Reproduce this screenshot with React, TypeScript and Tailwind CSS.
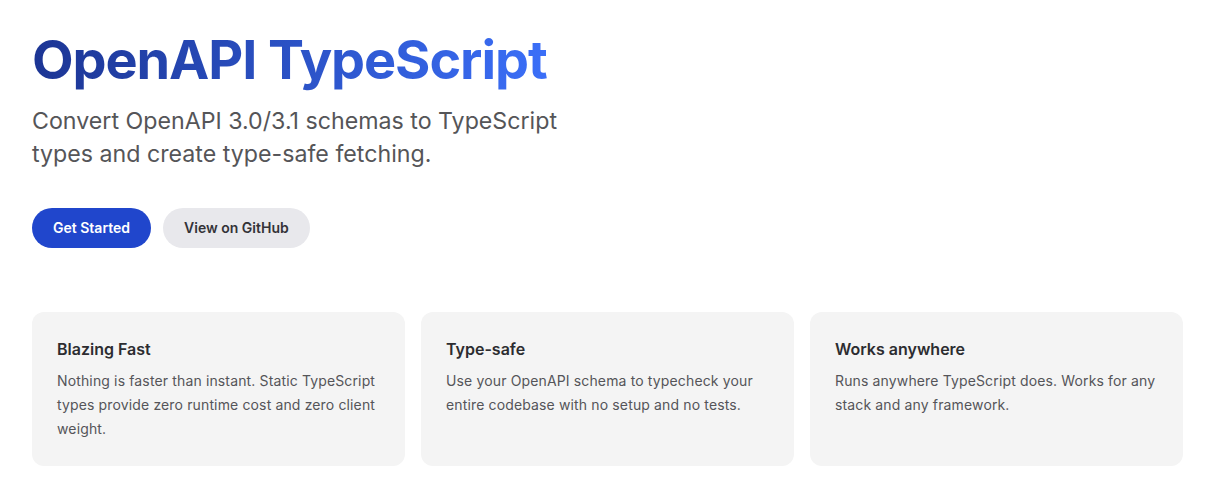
const features = [
  {
    title: "Blazing Fast",
    body: "Nothing is faster than instant. Static TypeScript types provide zero runtime cost and zero client weight.",
  },
  {
    title: "Type-safe",
    body: "Use your OpenAPI schema to typecheck your entire codebase with no setup and no tests.",
  },
  {
    title: "Works anywhere",
    body: "Runs anywhere TypeScript does. Works for any stack and any framework.",
  },
];

export default function App() {
  return (
    <div className="min-h-screen bg-white pl-8 pr-[29px] pt-7 font-['Inter',sans-serif]">
      <h1 className="inline-block bg-gradient-to-r from-[#1c3594] to-[#3b6ff8] bg-clip-text text-[54px] font-bold leading-[1.2] tracking-[-0.02em] text-transparent">
        OpenAPI TypeScript
      </h1>
      <p className="mt-3 max-w-[570px] text-[23.2px] leading-[33px] text-[#555558]">
        Convert OpenAPI 3.0/3.1 schemas to TypeScript types and create type-safe fetching.
      </p>
      <div className="mt-[37px] flex gap-3">
        <a
          href="#"
          className="flex h-10 items-center rounded-full bg-[#2046cc] px-[21px] text-sm font-semibold text-white"
        >
          Get Started
        </a>
        <a
          href="#"
          className="flex h-10 items-center rounded-full bg-[#e8e8ec] px-[21px] text-sm font-semibold text-[#333338]"
        >
          View on GitHub
        </a>
      </div>
      <div className="mt-16 grid grid-cols-3 gap-4">
        {features.map((f) => (
          <div key={f.title} className="h-[154px] rounded-xl bg-[#f4f4f4] pl-[25px] pr-6 pt-[25px]">
            <h3 className="text-base font-semibold text-[#2c2c30]">{f.title}</h3>
            <p className="mt-2 text-sm leading-6 tracking-[0.01em] text-[#555559]">{f.body}</p>
          </div>
        ))}
      </div>
    </div>
  );
}
